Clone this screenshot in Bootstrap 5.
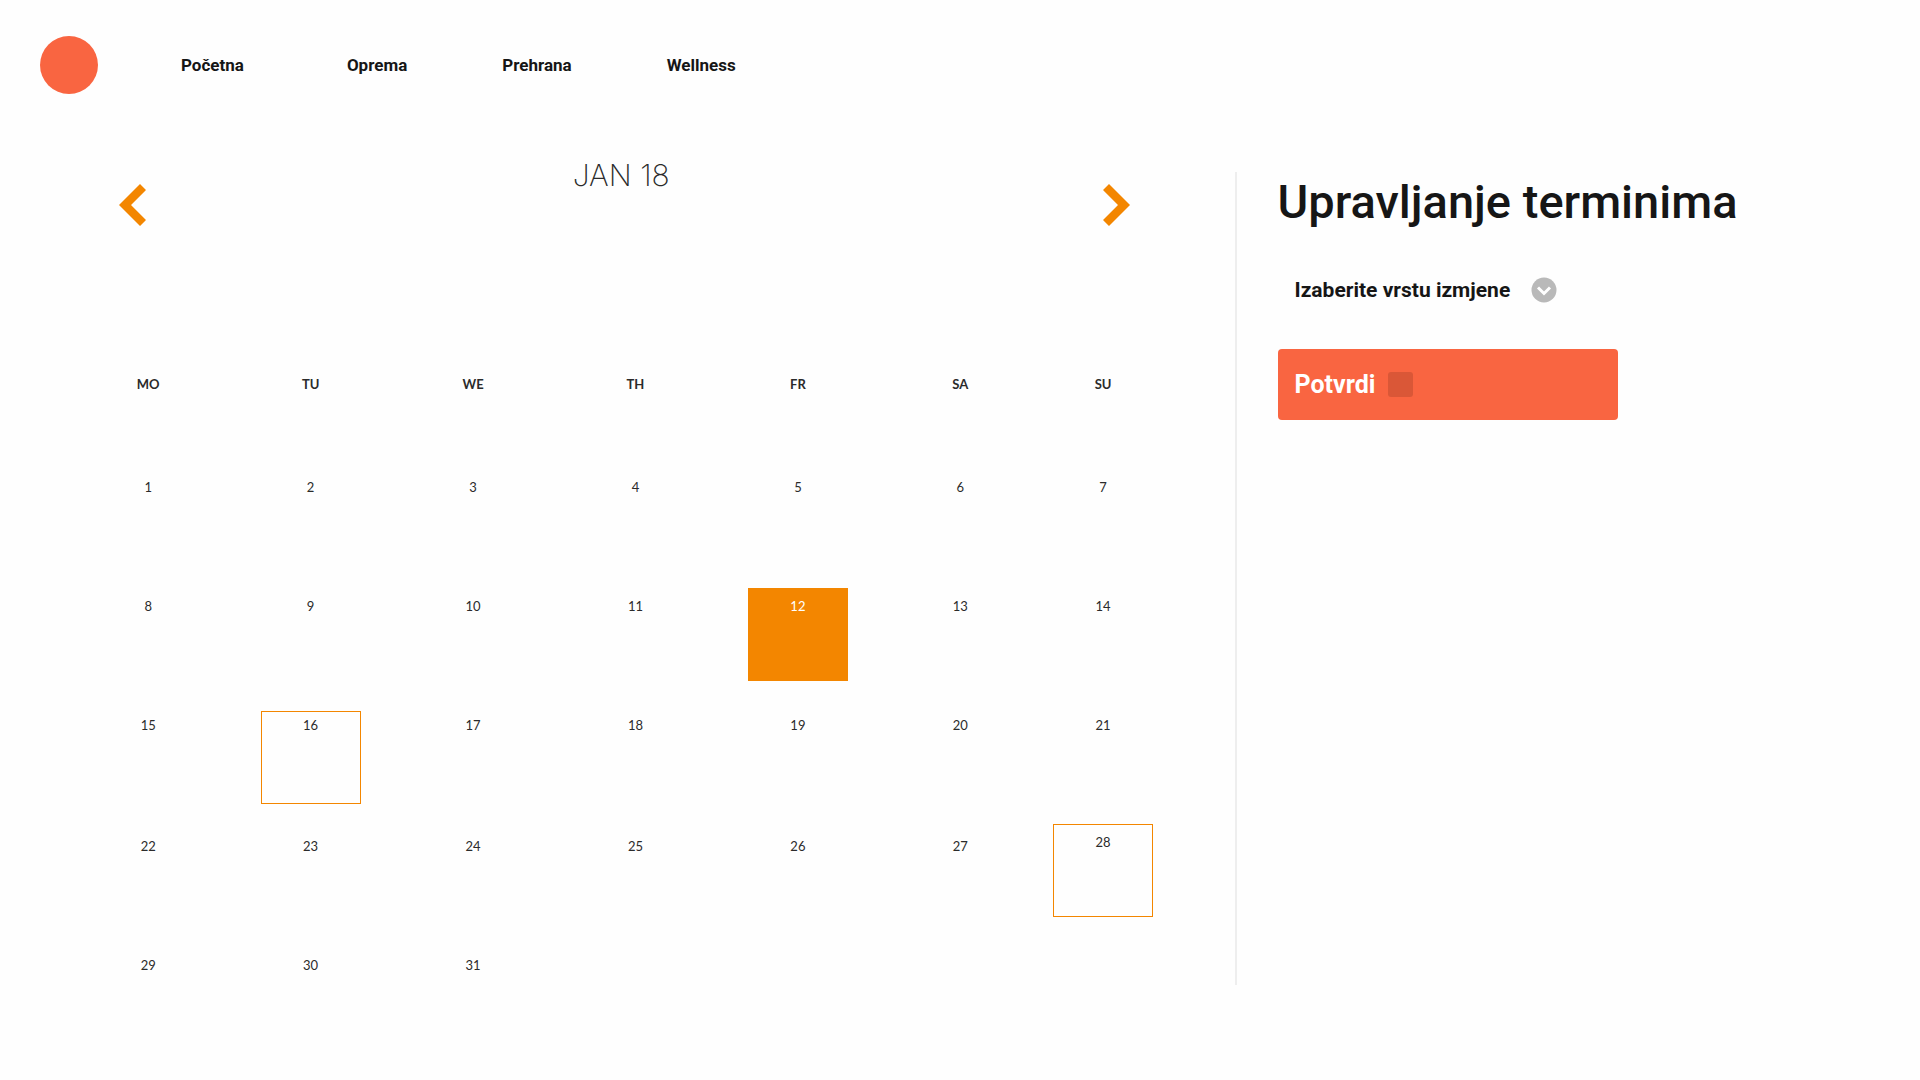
<!DOCTYPE html>
<html lang="bs">
<head>
<meta charset="utf-8">
<meta name="viewport" content="width=device-width, initial-scale=1">
<title>Upravljanje terminima</title>
<link href="https://cdn.jsdelivr.net/npm/bootstrap@5.3.0/dist/css/bootstrap.min.css" rel="stylesheet">
<style>
:root { --coral: #f96541; --orange: #f38600; --ink: #161616; --soft: #2b2b2b; }
body { background: #fefefe; color: var(--ink); font-family: Roboto, "Noto Sans", sans-serif; }
.site-nav { padding: 36px 40px; }
.brand-dot { width: 58px; height: 58px; background: var(--coral); }
.site-links { margin-left: 83px; gap: 0 95px; font-size: 17px; line-height: 24px; }
.site-links a { color: var(--ink); }
.site-links a:first-child { padding-right: 8px; }
.main-area { padding-top: 28px; }
.cal-pane { width: 64.3%; padding: 0 70px 0 67px; }
.cal-head { padding: 0 35px 0 52px; height: 217px; }
.cal-title { font: 200 30px/34px Inter, sans-serif; color: var(--soft); padding-right: 6px; }
.cal-arrow { width: 27px; height: 42px; margin-top: 26px; }
.cal-arrow svg { display: block; fill: var(--orange); }
.cal-grid { width: 100%; table-layout: fixed; text-align: center; font: 13px/18px Lato, sans-serif; color: var(--soft); }
.cal-grid th, .cal-grid td { padding: 0; }
.cal-grid col { width: 14.8%; }
.cal-grid col:last-child { width: 11.2%; }
.cal-grid thead th { height: 90px; font-weight: 700; text-align: center; vertical-align: top; }
.cal-grid tbody tr { height: 119px; }
.cal-grid tbody tr:nth-child(3) { height: 121px; }
.cal-grid tbody tr:last-child { height: 42px; }
.cal-grid td { vertical-align: baseline; }
.cal-grid td:not(:has(.day-box)) { padding-top: 13px; }
.day-box { width: 100px; height: 93px; padding-top: 8px; border: 1px solid var(--orange); }
.day-today { background: var(--orange); color: #fff; }
.day-early { padding-top: 4px; }
.cal-grid td.cell-top { vertical-align: top; }
.side-pane { border-left: 2px solid #eee; padding: 0 41px; margin-top: 14px; }
.side-title { font-size: 47px; line-height: 60px; font-weight: 500; }
.kind-select { appearance: none; border: 0; background: transparent; color: var(--ink); font-size: 21px; line-height: 30px; font-weight: 700; padding: 0 46px 0 17px; margin-top: 43px; }
.kind-mark { right: 0; bottom: 2px; pointer-events: none; }
.confirm-btn { --bs-btn-bg: var(--coral); --bs-btn-color: #fff; --bs-btn-border-width: 0; --bs-btn-hover-bg: #ea5733; --bs-btn-hover-color: #fff; --bs-btn-border-radius: 4px; width: 340px; height: 71px; padding: 0 17px; margin-top: 44px; font-size: 25px; font-weight: 700; gap: 13px; }
.confirm-chip { width: 25px; height: 25px; border-radius: 3px; background: #da5737; }
</style>
</head>
<body>
<nav class="site-nav d-flex align-items-center" aria-label="Glavna navigacija">
  <a href="#" class="brand-dot rounded-circle" aria-label="Logo"></a>
  <div class="site-links d-flex flex-wrap fw-bold">
    <a class="text-decoration-none" href="#">Početna</a>
    <a class="text-decoration-none" href="#">Oprema</a>
    <a class="text-decoration-none" href="#">Prehrana</a>
    <a class="text-decoration-none" href="#">Wellness</a>
  </div>
</nav>
<main class="main-area d-flex">
  <section class="cal-pane flex-shrink-0">
    <div class="cal-head d-flex justify-content-between align-items-start">
      <button type="button" class="cal-arrow border-0 bg-transparent p-0" aria-label="Prethodni mjesec"><svg width="27" height="42" viewBox="0 0 27 42"><path d="M0 21 21 0l6 6-15 15 15 15-6 6z"/></svg></button>
      <h2 class="cal-title m-0">JAN 18</h2>
      <button type="button" class="cal-arrow border-0 bg-transparent p-0" aria-label="Sljedeći mjesec"><svg width="27" height="42" viewBox="0 0 27 42"><path d="M27 21 6 0 0 6l15 15L0 36l6 6z"/></svg></button>
    </div>
    <table class="cal-grid">
      <colgroup><col><col><col><col><col><col><col></colgroup>
      <thead><tr><th scope="col">MO</th><th scope="col">TU</th><th scope="col">WE</th><th scope="col">TH</th><th scope="col">FR</th><th scope="col">SA</th><th scope="col">SU</th></tr></thead>
      <tbody>
        <tr><td>1</td><td>2</td><td>3</td><td>4</td><td>5</td><td>6</td><td>7</td></tr>
        <tr><td>8</td><td>9</td><td>10</td><td>11</td><td><div class="day-box day-today mx-auto">12</div></td><td>13</td><td>14</td></tr>
        <tr><td>15</td><td><div class="day-box day-early mx-auto">16</div></td><td>17</td><td>18</td><td>19</td><td>20</td><td>21</td></tr>
        <tr><td>22</td><td>23</td><td>24</td><td>25</td><td>26</td><td>27</td><td class="cell-top"><div class="day-box mx-auto">28</div></td></tr>
        <tr><td>29</td><td>30</td><td>31</td><td></td><td></td><td></td><td></td></tr>
      </tbody>
    </table>
  </section>
  <section class="side-pane flex-grow-1">
    <h1 class="side-title m-0">Upravljanje terminima</h1>
    <div>
      <div class="position-relative d-inline-block">
        <select class="kind-select d-block" aria-label="Vrsta izmjene"><option>Izaberite vrstu izmjene</option></select>
        <svg class="kind-mark position-absolute" width="26" height="26" viewBox="0 0 26 26" aria-hidden="true"><circle cx="13" cy="13" r="12.5" fill="#b9b9b9"/><path d="m7 10.5 6 6 6-6" fill="none" stroke="#fff" stroke-width="3"/></svg>
      </div>
    </div>
    <button type="button" class="btn confirm-btn d-flex align-items-center">Potvrdi <span class="confirm-chip"></span></button>
  </section>
</main>
<script src="https://cdn.jsdelivr.net/npm/bootstrap@5.3.0/dist/js/bootstrap.bundle.min.js"></script>
</body>
</html>
